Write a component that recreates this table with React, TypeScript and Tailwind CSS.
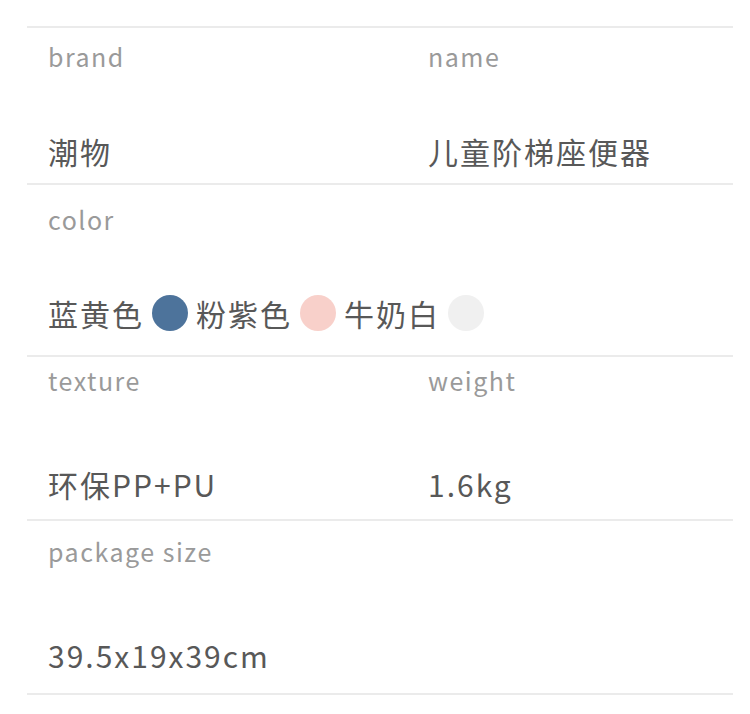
import React from "react";

const font = { fontFamily: '"Noto Sans CJK SC", "Noto Sans", sans-serif' };

const Label = ({ children }: { children: React.ReactNode }) => (
  <div className="text-[25px] leading-[40px] tracking-[1.5px] text-[#9a9a9a]">{children}</div>
);

const Value = ({ children }: { children: React.ReactNode }) => (
  <div className="flex items-center text-[30px] leading-[50px] tracking-[2px] text-[#585858]">
    {children}
  </div>
);

const Swatch = ({ className }: { className: string }) => (
  <span className={"inline-block w-9 h-9 rounded-full mx-[8px] " + className} />
);

const App = () => {
  return (
    <div className="w-[750px] h-[714px] bg-white pt-[26px]" style={font}>
      <div className="ml-[27px] w-[706px] border-t-2 border-[#ebebeb]">
        {/* brand / name */}
        <div className="flex border-b-2 border-[#ebebeb] pt-[8px] pb-[7px]">
          <div className="w-[401px] pl-[21px]">
            <Label>brand</Label>
            <div className="mt-[50px]">
              <Value>潮物</Value>
            </div>
          </div>
          <div className="flex-1">
            <Label>name</Label>
            <div className="mt-[50px]">
              <Value>儿童阶梯座便器</Value>
            </div>
          </div>
        </div>

        {/* color */}
        <div className="border-b-2 border-[#ebebeb] pt-[14px] pb-[17px] pl-[21px]">
          <Label>color</Label>
          <div className="mt-[49px]">
            <Value>
              蓝黄色
              <Swatch className="bg-[#4d739b]" />
              粉紫色
              <Swatch className="bg-[#f8d0ca]" />
              牛奶白
              <Swatch className="bg-[#f0f0f0]" />
            </Value>
          </div>
        </div>

        {/* texture / weight */}
        <div className="flex border-b-2 border-[#ebebeb] pt-[3px] pb-[10px]">
          <div className="w-[401px] pl-[21px]">
            <Label>texture</Label>
            <div className="mt-[59px]">
              <Value>环保PP+PU</Value>
            </div>
          </div>
          <div className="flex-1">
            <Label>weight</Label>
            <div className="mt-[59px]">
              <Value>1.6kg</Value>
            </div>
          </div>
        </div>

        {/* package size */}
        <div className="border-b-2 border-[#ebebeb] pt-[10px] pb-[13px] pl-[21px]">
          <Label>package size</Label>
          <div className="mt-[59px]">
            <Value>39.5x19x39cm</Value>
          </div>
        </div>
      </div>
    </div>
  );
};

export default App;
